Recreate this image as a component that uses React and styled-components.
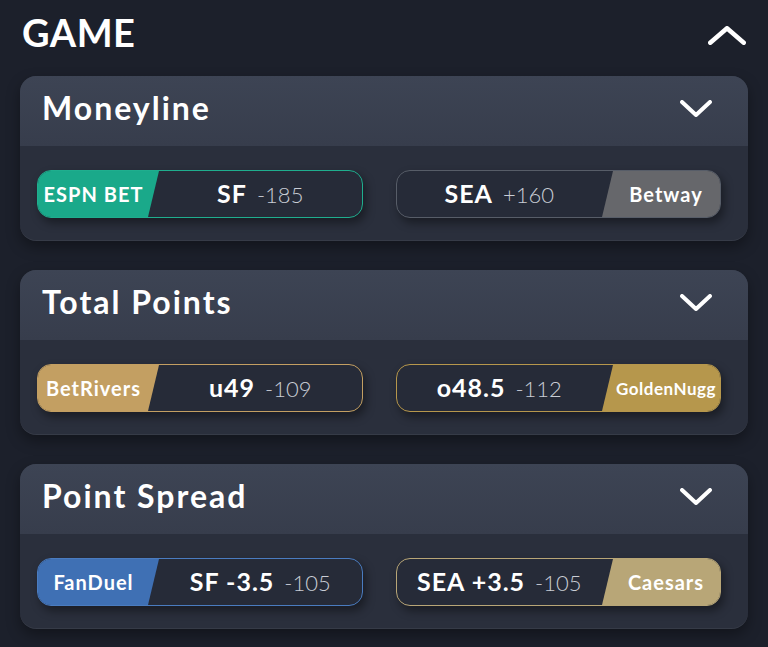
import React from 'react';
import styled, { createGlobalStyle } from 'styled-components';

const GlobalStyle = createGlobalStyle`
  html, body {
    margin: 0;
    padding: 0;
    background: #1c202b;
  }
  body {
    font-family: "Lato", "Liberation Sans", sans-serif;
    color: #ffffff;
  }
`;

const Page = styled.div`
  width: 768px;
  height: 647px;
  box-sizing: border-box;
  padding: 0 20px;
  background: #1c202b;
  overflow: hidden;
`;

const SectionHeader = styled.div`
  height: 64px;
  display: flex;
  align-items: center;
  justify-content: space-between;
  margin-bottom: 12px;
  padding-left: 2px;
`;

const SectionTitle = styled.h1`
  margin: 0;
  font-size: 38px;
  line-height: 1;
  font-weight: 700;
  letter-spacing: 0.5px;
`;

const Toggle = styled.div`
  display: flex;
  padding-top: ${(p) => p.$offset || 0}px;
  margin-right: ${(p) => p.$right || 0}px;
`;

const Cards = styled.div`
  display: flex;
  flex-direction: column;
  gap: 29px;
`;

const Card = styled.div`
  border-radius: 16px;
  overflow: hidden;
  background: #2a2f3c;
  box-shadow: 0 6px 14px rgba(0, 0, 0, 0.35), inset 0 -1px 0 rgba(255, 255, 255, 0.06);
`;

const CardHeader = styled.div`
  height: 70px;
  box-sizing: border-box;
  padding: 0 36px 6px 22px;
  display: flex;
  align-items: center;
  justify-content: space-between;
  background: linear-gradient(180deg, #3d4454 0%, #373d4c 100%);
`;

const CardTitle = styled.h2`
  margin: 0;
  font-size: 32px;
  line-height: 1;
  font-weight: 700;
  letter-spacing: 2px;
`;

const CardBody = styled.div`
  padding: 24px 27px 23px 17px;
  display: grid;
  grid-template-columns: 1fr 1fr;
  gap: 33px;
`;

const Pill = styled.div`
  height: 48px;
  box-sizing: border-box;
  border: 1.5px solid ${(p) => p.$border};
  border-radius: 14px;
  background: #262b38;
  overflow: hidden;
  display: flex;
  flex-direction: ${(p) => (p.$side === 'right' ? 'row-reverse' : 'row')};
  box-shadow: 3px 5px 10px rgba(0, 0, 0, 0.4);
`;

const Book = styled.div`
  flex: 0 0 ${(p) => (p.$side === 'right' ? 118 : 121)}px;
  background: ${(p) => p.$color};
  display: flex;
  align-items: center;
  justify-content: center;
  padding: ${(p) => (p.$side === 'right' ? '0 0 0 10px' : '0 10px 0 0')};
  box-sizing: border-box;
  clip-path: ${(p) =>
    p.$side === 'right'
      ? 'polygon(11px 0, 100% 0, 100% 100%, 0 100%)'
      : 'polygon(0 0, 100% 0, calc(100% - 11px) 100%, 0 100%)'};
  margin-${(p) => (p.$side === 'right' ? 'left' : 'right')}: -11px;
  font-size: ${(p) => p.$size || 20}px;
  font-weight: 700;
  letter-spacing: ${(p) => (p.$size ? 0.5 : 1)}px;
  color: #ffffff;
  white-space: nowrap;
`;

const Line = styled.div`
  flex: 1;
  display: flex;
  align-items: baseline;
  justify-content: center;
  gap: 10px;
  padding: ${(p) => (p.$side === 'right' ? '0 11px 0 0' : '0 0 0 11px')};
  line-height: 45px;
`;

const Pick = styled.span`
  font-size: 25px;
  font-weight: 700;
  letter-spacing: 1px;
  color: #ffffff;
`;

const Odds = styled.span`
  font-size: 22px;
  font-weight: 300;
  color: #c9cdd5;
`;

const Chevron = ({ up, w, h, stroke }) => (
  <svg width={w} height={h} viewBox={`0 0 ${w} ${h}`} fill="none">
    <polyline
      points={
        up
          ? `${stroke / 2},${h - stroke / 2} ${w / 2},${stroke / 2} ${w - stroke / 2},${h - stroke / 2}`
          : `${stroke / 2},${stroke / 2} ${w / 2},${h - stroke / 2} ${w - stroke / 2},${stroke / 2}`
      }
      stroke="#ffffff"
      strokeWidth={stroke}
      strokeLinecap="round"
      strokeLinejoin="round"
    />
  </svg>
);

const markets = [
  {
    title: 'Moneyline',
    left: { book: 'ESPN BET', color: '#1aa98a', border: '#1fae8e', pick: 'SF', odds: '-185' },
    right: { book: 'Betway', color: '#66676b', border: '#575d68', pick: 'SEA', odds: '+160' },
  },
  {
    title: 'Total Points',
    left: { book: 'BetRivers', color: '#c39f62', border: '#c39f62', pick: 'u49', odds: '-109' },
    right: { book: 'GoldenNugg', color: '#b6974c', border: '#b6974c', pick: 'o48.5', odds: '-112', size: 17 },
  },
  {
    title: 'Point Spread',
    left: { book: 'FanDuel', color: '#3f70b4', border: '#4a7cc0', pick: 'SF -3.5', odds: '-105' },
    right: { book: 'Caesars', color: '#b8a677', border: '#b8a677', pick: 'SEA +3.5', odds: '-105' },
  },
];

const Offer = ({ side, book, color, border, pick, odds, size }) => (
  <Pill $side={side} $border={border}>
    <Book $side={side} $color={color} $size={size}>
      {book}
    </Book>
    <Line $side={side}>
      <Pick>{pick}</Pick>
      <Odds>{odds}</Odds>
    </Line>
  </Pill>
);

export default function App() {
  return (
    <>
      <GlobalStyle />
      <Page>
        <SectionHeader>
          <SectionTitle>GAME</SectionTitle>
          <Toggle $offset={6} $right={2}>
            <Chevron up w={38} h={19} stroke={4.5} />
          </Toggle>
        </SectionHeader>
        <Cards>
          {markets.map((m) => (
            <Card key={m.title}>
              <CardHeader>
                <CardTitle>{m.title}</CardTitle>
                <Toggle>
                  <Chevron w={32} h={17} stroke={4} />
                </Toggle>
              </CardHeader>
              <CardBody>
                <Offer side="left" {...m.left} />
                <Offer side="right" {...m.right} />
              </CardBody>
            </Card>
          ))}
        </Cards>
      </Page>
    </>
  );
}
